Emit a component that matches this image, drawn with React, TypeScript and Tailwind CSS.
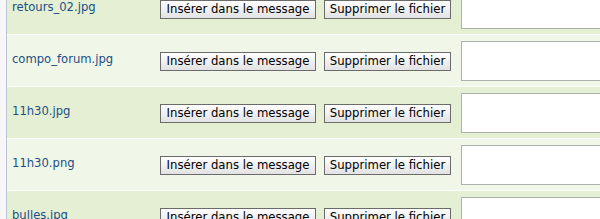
import React from "react";

const files = ["retours_02.jpg", "compo_forum.jpg", "11h30.jpg", "11h30.png", "bulles.jpg"];

const App: React.FC = () => {
  return (
    <div
      className="w-[600px] h-[219px] overflow-hidden bg-[#f7f7f7]"
      style={{ fontFamily: '"DejaVu Sans", Verdana, sans-serif' }}
    >
      <div className="ml-[6px] border-l border-[#bcc2d4] -mt-[17px]">
        {files.map((name, i) => (
          <div
            key={name + i}
            className={`flex items-center pt-[6px] pb-[5px] border-b border-white ${
              i % 2 === 0 ? "bg-[#e4efd3]" : "bg-[#f0f6e8]"
            }`}
          >
            {/* File name */}
            <div className="w-[153px] shrink-0 pl-[5px] pb-[3px] text-[11.6px] leading-[13px] text-[#1b4f86]">
              {name}
            </div>

            {/* Action buttons */}
            <div className="flex items-center gap-[8px] shrink-0">
              <button
                type="button"
                className="w-[156px] h-[19px] border border-[#6b6b6b] bg-gradient-to-b from-white to-[#e2e2e2] text-[11.7px] leading-[13px] text-black"
              >
                Insérer dans le message
              </button>
              <button
                type="button"
                className="w-[127px] h-[19px] border border-[#6b6b6b] bg-gradient-to-b from-white to-[#e2e2e2] text-[11.7px] leading-[13px] text-black"
              >
                Supprimer le fichier
              </button>
            </div>

            {/* Comment box */}
            <textarea
              className="ml-[10px] w-[300px] h-[40px] shrink-0 border border-[#abb3ab] bg-white resize-none outline-none"
              readOnly
            />
          </div>
        ))}
      </div>
    </div>
  );
};

export default App;
